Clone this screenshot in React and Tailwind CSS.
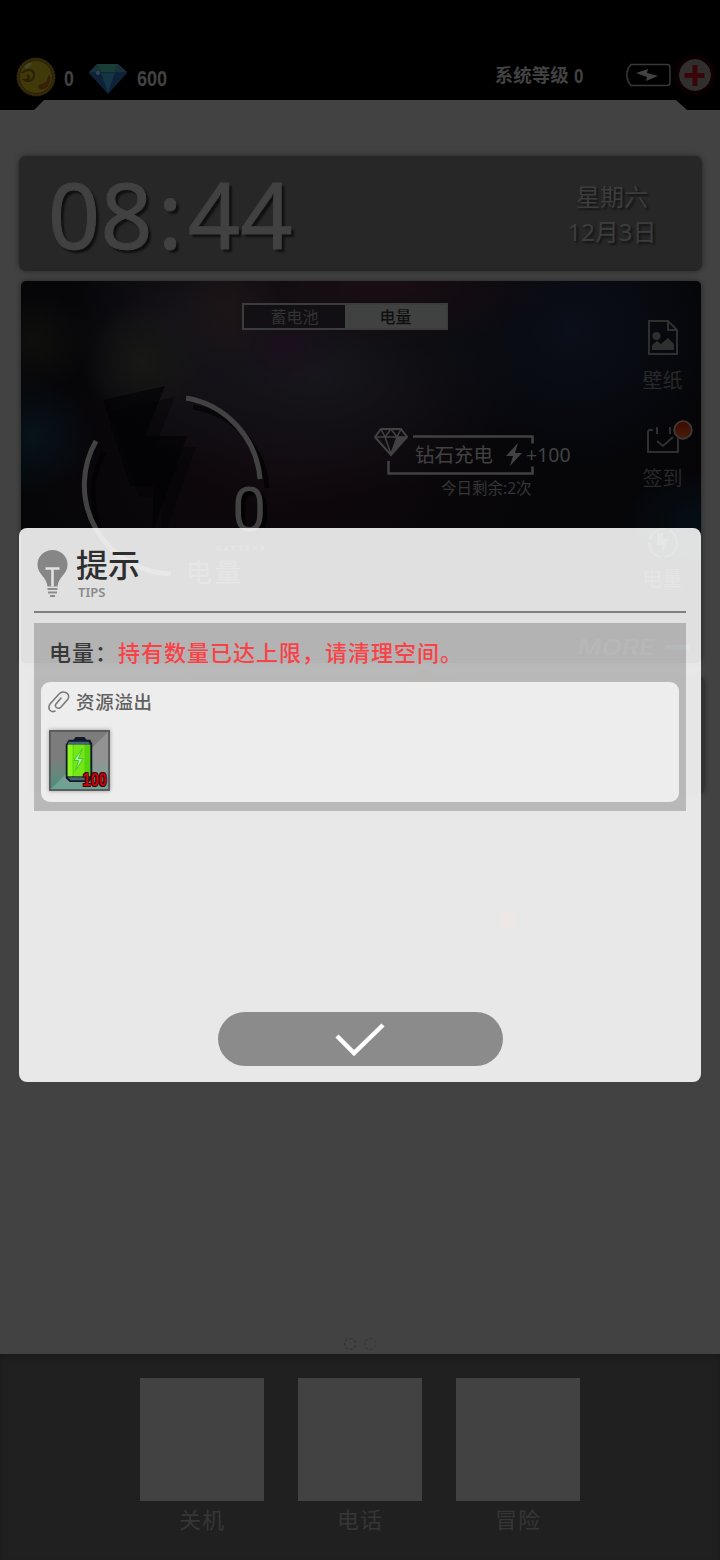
const dockItems = ["关机", "电话", "冒险"];

function Coin() {
  return (
    <svg className="w-10 h-10" viewBox="0 0 40 40">
      <circle cx="20" cy="20" r="19" fill="#33290b" stroke="#3c2a0b" strokeWidth="1" strokeDasharray="2 1.5" />
      <circle cx="20" cy="20" r="16.5" fill="#403a0a" stroke="#2a2207" strokeWidth="1" />
      <path d="M6 16c5-5 12-4 12 2s-6 7-9 5c4 0 5-4 2-5" fill="none" stroke="#2c2006" strokeWidth="2.2" />
      <path d="M22 29c3-3 8-2 9-6l2-6c3 5 1 13-5 15-3 1-6 0-6-3z" fill="#37200a" />
      <path d="M9 9c2-2 4-3 7-3l-3 4-3 2z" fill="#48482f" />
    </svg>
  );
}

function Gem() {
  return (
    <svg className="mt-[3px] w-10 h-[30px]" viewBox="0 0 40 30">
      <path d="M9 0h21l9 9-19 21L1 9z" fill="#102736" />
      <path d="M9 0h21l-4 8H13z" fill="#1a3d37" />
      <path d="M9 0l4 8H1zM30 0l-4 8h13z" fill="#1a303a" />
      <path d="M13 9h14l-7 20z" fill="#143544" />
      <path d="M1 9h12l7 20zM39 9H27l-7 20z" fill="#0d2139" />
      <circle cx="10" cy="9" r="2" fill="#304850" />
    </svg>
  );
}

function TopBar() {
  return (
    <header className="h-[100px] flex items-start text-[#424242] font-bold font-['Liberation_Sans','Noto_Sans_CJK_SC',sans-serif]">
      <div className="flex items-center h-10 mt-[57px] ml-4 text-[22px] leading-none">
        <Coin />
        <span className="ml-2 mt-[3px] w-[24px] origin-left scale-x-[0.8]">0</span>
        <Gem />
        <span className="ml-[9px] mt-[3px] origin-left scale-x-[0.82]">600</span>
      </div>
      <div className="flex items-center h-10 mt-[55px] ml-auto mr-[9px]">
        <div className="flex items-center mr-[41px] pt-[2px] text-[18.500px] leading-none whitespace-nowrap">
          <span>系统等级</span>
          <span className="ml-[5px] text-[20px] origin-left scale-x-[0.85]">0</span>
        </div>
        <svg className="w-[46px] h-6" viewBox="0 0 46 24">
          <path d="M5 1.5h36q3 0 3 3v15q0 3-3 3H5l-3-4v-2l-1-1v-7l1-1v-2z" fill="none" stroke="#383838" strokeWidth="1.5" />
          <path d="M10 10l12-4-1 4 11 3-12 5 1-4z" fill="#424242" />
        </svg>
        <svg className="w-8 h-8 ml-[7px] rounded-full shadow-[0_0_6px_2px_#1c0305]" viewBox="0 0 32 32">
          <circle cx="16" cy="16" r="16" fill="#312f2d" />
          <path d="M13.500 6h5v8h7v5h-7v8h-5v-8h-8v-5h8z" fill="#3a0508" />
        </svg>
      </div>
    </header>
  );
}

function ClockCard() {
  return (
    <div className="h-[115px] ml-[19px] mr-[18px] rounded-[7px] bg-[#272727] shadow-[0_0_5px_#242424] flex items-center justify-between text-[#414141]">
      <div className="pl-[29px] pt-[2px] text-[91px] leading-none tracking-[0.500px] font-['Noto_Sans'] [-webkit-text-stroke:1px_#414141] [text-shadow:3px_3px_2px_#101010]">
        08<span className="mx-[5px]">:</span>44
      </div>
      <div className="w-[180px] pt-px text-center text-[24px] leading-[35px] text-[#3c3c3c] [text-shadow:2px_2px_2px_#151515]">
        <p>星期六</p>
        <p>12月3日</p>
      </div>
    </div>
  );
}

function Dial() {
  return (
    <svg className="w-[300px] h-[333px] shrink-0" viewBox="21 330 300 333">
      <path d="M111 411l64-14-20 50h41l-35 98 2-48h-24z" fill="#020203" opacity=".4" />
      <path d="M103 400l62-14-20 50h42l-35 98 2-48h-24z" fill="#020203" opacity=".65" />
      <g fill="none" strokeWidth="5">
        <path d="M193 407a88 88 0 0 1 74 81M104 452a88 88 0 0 0 70 130" stroke="#020202" opacity=".7" />
        <path d="M186 398a89 89 0 0 1 74 81M96 441a89 89 0 0 0 75 133" stroke="#424242" />
      </g>
      <text x="232" y="531" fontSize="61" fill="#424242" fontFamily="Roboto" className="[text-shadow:4px_4px_1px_#020202]">0</text>
      <text x="216" y="550.5" fontSize="8" letterSpacing="2.400" fontWeight="bold" fill="#2c2c2c" fontFamily="Roboto">BATTERY</text>
      <text x="186" y="582" fontSize="26" letterSpacing="3" fill="#303030" fontFamily="Noto Sans CJK SC">电量</text>
    </svg>
  );
}

function DiamondCharge() {
  return (
    <div className="mt-[95px] ml-[53px] w-[200px] relative text-[#424242]">
      <svg className="absolute left-0 top-0 w-[200px] h-[52px]" viewBox="374 425 200 52">
        <path d="M413 436.500h119.500v7M388.500 461v12.500h144v-7" fill="none" stroke="#424242" strokeWidth="2.500" />
        <path d="M381 429h20l6 8-16 18-16-18z" fill="none" stroke="#424242" strokeWidth="2" />
        <path d="M376 437h30M381 429l4 8 6 17 6-17 4-8M385 437l6-8 6 8" fill="none" stroke="#424242" strokeWidth="1.500" />
        <path d="M397 437h10l-15 17z" fill="#424242" />
        <path d="M518 443l-12 13h7l-3 10 12-13h-7z" fill="#424242" />
      </svg>
      <div className="h-[60px] pl-[41px] flex items-center text-[19.500px] leading-none whitespace-nowrap">
        <span>钻石充电</span>
        <span className="ml-[33px]">+100</span>
      </div>
      <p className="-mt-[5px] pl-[67px] text-[15.500px] leading-[16px] whitespace-nowrap text-[#363636]">今日剩余:2次</p>
    </div>
  );
}

function SideMenu() {
  return (
    <div className="w-[80px] shrink-0 pt-[38px] pl-[3px] flex flex-col items-center text-[20px] leading-[26px] text-[#282828]">
      <svg className="w-8 h-[38px]" viewBox="0 0 32 38" fill="none" stroke="#2f2f2f" strokeWidth="2">
        <path d="M2 2h19l9 9v24H2zM21 2v9h9" />
        <circle cx="9.500" cy="17" r="4" fill="#2f2f2f" stroke="none" />
        <path d="M5 31v-5l5-4 4 3 7-6 6 6v6z" fill="#2f2f2f" stroke="none" />
      </svg>
      <span className="mt-[11px]">壁纸</span>
      <div className="relative mt-[30px]">
        <svg className="w-[34px] h-[32px]" viewBox="0 0 34 32" fill="none" stroke="#2f2f2f" strokeWidth="2">
          <path d="M7 6H4q-2 0-2 2v20h30V14M11 3v7M24 3v7M11 17l6 5 10-9" />
        </svg>
        <svg className="absolute -right-[13px] -top-[4px] w-5 h-5" viewBox="0 0 20 20">
          <defs>
            <linearGradient id="badge" x1="0" y1="0" x2="0" y2="1">
              <stop offset="0" stopColor="#3f0803" />
              <stop offset="1" stopColor="#45200a" />
            </linearGradient>
          </defs>
          <circle cx="10" cy="10" r="8.800" fill="url(#badge)" stroke="#3e3a3a" strokeWidth="1.800" />
        </svg>
      </div>
      <span className="mt-[10px]">签到</span>
      <svg className="mt-[35px] w-8 h-8" viewBox="0 0 32 32" fill="none" stroke="#303030" strokeWidth="2">
        <circle cx="16" cy="16" r="14" strokeDasharray="20 4" />
        <path d="M10 6v12h5v8l7-14h-6V6z" fill="#303030" stroke="none" />
      </svg>
      <span className="mt-[7px]">电量</span>
    </div>
  );
}

function PowerCard() {
  return (
    <div className="mt-[10px] ml-[21px] mr-[19px] h-[382px] rounded-[5px] shadow-[0_0_5px_#222] flex overflow-hidden bg-[#060609] bg-[linear-gradient(rgba(5,5,8,0.4),rgba(5,5,8,0.4)),radial-gradient(ellipse_60px_60px_at_122px_80px,#24241d,transparent),radial-gradient(ellipse_55px_60px_at_205px_30px,#2c2021,transparent),radial-gradient(ellipse_50px_40px_at_265px_65px,#281628,transparent),radial-gradient(ellipse_190px_60px_at_360px_5px,#28141c,transparent),radial-gradient(ellipse_60px_50px_at_14px_60px,#15160f,transparent),radial-gradient(ellipse_60px_60px_at_12px_155px,#081c26,transparent),radial-gradient(ellipse_220px_130px_at_290px_90px,#24232a,transparent),radial-gradient(ellipse_150px_140px_at_550px_50px,#0e1524,transparent),radial-gradient(ellipse_80px_50px_at_680px_240px,#05141e,transparent),radial-gradient(ellipse_110px_140px_at_160px_40px,#1f1a22,transparent),radial-gradient(ellipse_260px_150px_at_260px_190px,#180a10,transparent)]">
      <div className="w-[600px] shrink-0 flex flex-col">
        <div className="mt-[22px] ml-[221px] w-[206px] h-[27px] shrink-0 border-2 border-[#3c3c3c] flex text-[16px] leading-[25px] text-center">
          <span className="w-1/2 text-[#323232] bg-[#111014]/70">蓄电池</span>
          <span className="w-1/2 bg-[#404242] text-[#101010] font-medium">电量</span>
        </div>
        <div className="flex items-start">
          <Dial />
          <DiamondCharge />
        </div>
      </div>
      <div className="relative">
        <SideMenu />
        <div className="absolute right-[12px] bottom-[5px] flex items-center gap-[10px] text-[21px] leading-none italic font-semibold text-[#2c2c2c] font-['Inter']">
          <span className="origin-right scale-x-[1.25]">MORE</span>
          <span className="w-6 h-[5px] bg-[#12343a]" />
        </div>
      </div>
    </div>
  );
}

function Tiles() {
  return (
    <div className="mt-[15px] mr-[16px] ml-[28px] h-[114px] flex gap-[6px]">
      <div className="w-[161px] rounded bg-[#3c3c3c] flex items-end justify-end pb-2 pr-[14px] text-[30px] leading-none text-[#343434]">启动</div>
      <div className="relative w-[251px] rounded bg-[#363636] shadow-[0_0_5px_#2a2a2a]">
        <span className="absolute right-3 -top-2 w-5 h-5 rounded-full bg-[#40201a]" />
      </div>
      <div className="flex-1 rounded bg-[#343434] shadow-[0_0_5px_#1c1c1c]" />
    </div>
  );
}

function Dock() {
  return (
    <footer className="h-[206px] bg-[#202020] shadow-[inset_0_4px_6px_#1b1b1b] flex justify-center gap-[34px] pt-6">
      {dockItems.map((name) => (
        <div key={name} className="w-[124px] flex flex-col items-center">
          <div className="w-full h-[123px] bg-[#424242]" />
          <span className="mt-[4px] text-[22px] leading-[28px] tracking-[1px] text-[#363636]">{name}</span>
        </div>
      ))}
    </footer>
  );
}

function BatteryItem() {
  return (
    <div className="relative w-[61px] h-[61px] mt-[14px] border-2 border-[#5a5d5c] bg-linear-to-b from-[#7c7c7c] from-45% to-[#48907c] shadow-[0_0_4px_#999]">
      <svg className="w-full h-full" viewBox="0 0 58 58">
        <path d="M58 0v58H0z" fill="#fff" opacity=".18" />
        <path d="M18 8h5l2-3h9l2 3h4l2 4v34l-3 5H19l-4-4V13z" fill="#131b2a" />
        <path d="M18 10h20l2 3H17zM17 46h22l-2 3H20z" fill="#4b6377" />
        <path d="M17 13h23v32H17z" fill="#57d40e" />
        <path d="M17 13h5v32h-5z" fill="#8cf41e" />
        <path d="M23 13h11v32H23z" fill="#74e814" />
        <path d="M32 17l-9 12h5l-3 10 8-12h-5z" fill="#a8f59a" stroke="#45c42d" strokeWidth="1" />
      </svg>
      <span className="absolute right-[1px] -bottom-[1px] origin-right scale-x-[0.76] text-[19px] leading-[20px] font-bold text-[#c4060c] font-['Liberation_Sans'] [text-shadow:1px_1px_0_#3a0508,-1px_-1px_0_#3a0508,1px_-1px_0_#3a0508,-1px_1px_0_#3a0508]">
        100
      </span>
    </div>
  );
}

function TipsDialog() {
  return (
    <div className="absolute left-[19px] top-[528px] w-[682px] h-[554px] rounded-[8px] bg-white/88 px-[15px] flex flex-col">
      <div className="h-[85px] border-b-[2.500px] border-[#808080] flex items-start pt-[21px]">
        <svg className="ml-[3px] w-[31px] h-[49px]" viewBox="0 0 31 49">
          <path d="M15.500 1C7 1 .5 7.500.5 15.500c0 10 9 12 10 22h10c1-10 10-12 10-22C30.500 7.500 24 1 15.500 1z" fill="#868686" />
          <path d="M8.500 19.500h14M15.500 19.500v18" stroke="#e2e2e2" strokeWidth="2.600" fill="none" />
          <path d="M10.500 40h10M11 43.500h9M13 47h5" stroke="#8c8c8c" strokeWidth="2" />
        </svg>
        <div className="ml-[8px]">
          <h2 className="text-[32px] leading-[32px] font-medium text-[#2e2e2e]">提示</h2>
          <p className="mt-[4px] ml-[2px] text-[13px] leading-[14px] font-semibold text-[#8a8a8a]">TIPS</p>
        </div>
      </div>
      <div className="mt-[10px] h-[188px] bg-black/20 px-[7px]">
        <p className="h-[59px] pl-[8px] flex items-center text-[22px] tracking-[1px] font-medium text-[#383838] whitespace-nowrap">
          电量：<span className="text-[#fa4146]">持有数量已达上限，请清理空间。</span>
        </p>
        <div className="h-[120px] rounded-[9px] bg-white/75 px-[8px] pt-[6px]">
          <div className="flex items-center h-[28px] gap-[6px]">
            <svg className="-ml-px w-[22px] h-[22px]" viewBox="0 0 22 22" fill="none" stroke="#777" strokeWidth="1.500">
              <path d="M7 20c-4 2-8-2-5-7L11 3c4-4 12-1 9 5l-7 8c-3 3-7 0-5-3l5-6" strokeLinecap="round" />
            </svg>
            <span className="text-[18.500px] tracking-[0.700px] font-medium text-[#606060]">资源溢出</span>
          </div>
          <BatteryItem />
        </div>
      </div>
      <button className="mt-auto mb-4 mx-auto w-[285px] h-[54px] rounded-[27px] bg-[#8b8b8b] flex items-center justify-center">
        <svg className="w-[52px] h-[36px]" viewBox="0 0 52 36">
          <path d="M3 15l17 17L49 4" fill="none" stroke="#fff" strokeWidth="4.500" />
        </svg>
      </button>
    </div>
  );
}

export default function App() {
  return (
    <div lang="zh-CN" className="relative w-[720px] h-[1560px] overflow-hidden bg-black flex flex-col font-['Noto_Sans','Noto_Sans_CJK_SC',sans-serif]">
      <TopBar />
      <main className="relative h-[1254px] shrink-0 pt-[56px] bg-[#424242] [clip-path:polygon(0_10px,34px_10px,44px_0,676px_0,687px_10px,100%_10px,100%_100%,0_100%)]">
        <ClockCard />
        <PowerCard />
        <Tiles />
        <span className="absolute left-[497px] top-[811px] w-5 h-[17px] rounded-full bg-[#6a3c28]" />
        <div className="absolute left-[344px] bottom-[4px] flex gap-2">
          <span className="w-3 h-3 rounded-full border border-dashed border-[#303030]" />
          <span className="w-3 h-3 rounded-full border border-dashed border-[#363636]" />
        </div>
      </main>
      <Dock />
      <TipsDialog />
    </div>
  );
}
